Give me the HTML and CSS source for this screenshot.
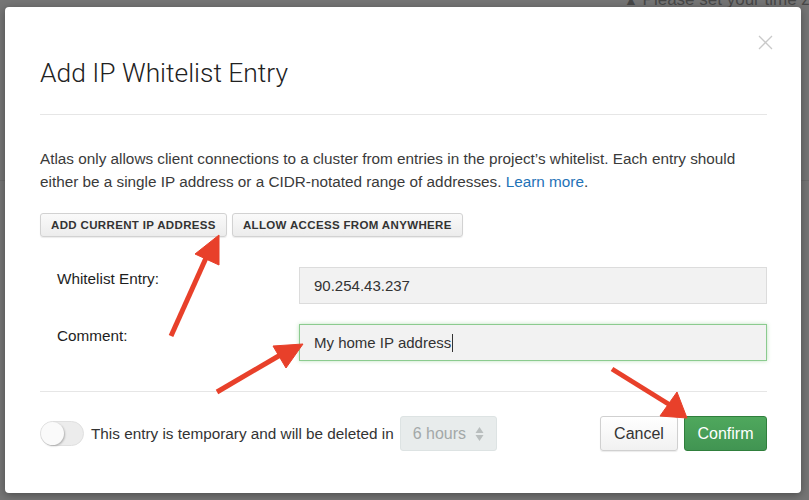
FILE: index.html
```html
<!DOCTYPE html>
<html>
<head>
<meta charset="utf-8">
<link rel="stylesheet" href="styles.css">
</head>
<body>
<div class="page">
  <div class="notice"><span class="warn">&#9650;</span> Please set your time zone</div>
  <div class="page-rule"></div>
</div>
<div class="modal">
  <button class="close" aria-label="Close">
    <svg width="15" height="15" viewBox="0 0 15 15"><path d="M1 1 L14 14 M14 1 L1 14" stroke="#c9c9c9" stroke-width="1.3" fill="none"/></svg>
  </button>
  <header class="modal-header">
    <h1 class="title">Add IP Whitelist Entry</h1>
  </header>
  <section class="modal-body">
    <p class="intro">Atlas only allows client connections to a cluster from entries in the project’s whitelist. Each entry should either be a single IP address or a CIDR-notated range of addresses. <a href="#" class="link">Learn more</a>.</p>
    <div class="quick">
      <button class="btn-small">Add current IP address</button>
      <button class="btn-small">Allow access from anywhere</button>
    </div>
    <div class="form">
      <div class="row">
        <label class="label">Whitelist Entry:</label>
        <div class="input">90.254.43.237</div>
      </div>
      <div class="row">
        <label class="label">Comment:</label>
        <div class="input focused">My home IP address<span class="caret"></span></div>
      </div>
    </div>
  </section>
  <footer class="modal-footer">
    <div class="temp">
      <span class="toggle"><span class="knob"></span></span>
      <span class="temp-text">This entry is temporary and will be deleted in</span>
      <span class="select">6 hours
        <svg class="updown" width="9" height="16" viewBox="0 0 9 16"><path d="M4.5 1 L8.5 7 L0.5 7 Z M4.5 15 L8.5 9 L0.5 9 Z" fill="#b9bebe"/></svg>
      </span>
    </div>
    <div class="actions">
      <button class="btn cancel">Cancel</button>
      <button class="btn confirm">Confirm</button>
    </div>
  </footer>
</div>
<svg class="arrows" width="809" height="500" viewBox="0 0 809 500">
  <g fill="#e8402a" stroke="#e8402a" stroke-linejoin="miter">
    <line x1="171" y1="336" x2="206" y2="258" stroke-width="5"/>
    <polygon points="219,235 195,254 219,265" stroke-width="1"/>
    <line x1="217" y1="392" x2="282" y2="354" stroke-width="5"/>
    <polygon points="303,344 273,346 286,368" stroke-width="1"/>
    <line x1="612" y1="369" x2="670" y2="405" stroke-width="5"/>
    <polygon points="687,418 660,416 677,392" stroke-width="1"/>
  </g>
</svg>
</body>
</html>
```
FILE: styles.css
```css
* { box-sizing: border-box; }
html, body { margin: 0; padding: 0; }
body {
  width: 809px;
  height: 500px;
  overflow: hidden;
  background: #757575;
  font-family: "Liberation Sans", Arial, sans-serif;
  color: #333;
  position: relative;
}
.page {
  position: absolute;
  inset: 0;
}
.notice {
  position: absolute;
  left: 624px;
  top: -10px;
  font-size: 17px;
  color: #474747;
  white-space: nowrap;
}
.warn { font-size: 14px; }
.page-rule {
  position: absolute;
  left: 0; right: 0;
  top: 180px;
  height: 1px;
  background: #6c6c6c;
}
.modal {
  position: relative;
  margin: 7px 8px 0 5px;
  width: 796px;
  height: 486px;
  background: #fff;
  border-radius: 4px;
  box-shadow: 0 2px 8px rgba(0,0,0,0.35);
  padding: 0 34px 0 35px;
}
.close {
  position: absolute;
  top: 28px;
  right: 28px;
  border: 0;
  background: none;
  padding: 0;
  width: 15px;
  height: 15px;
  display: flex;
}
.modal-header {
  padding-top: 50px;
  border-bottom: 1px solid #e6e6e6;
  padding-bottom: 25px;
}
.title {
  margin: 0;
  font-family: Roboto, "Liberation Sans", sans-serif;
  font-weight: 300;
  font-size: 26.4px;
  line-height: 32px;
  color: #222;
}
.modal-body {
  padding-top: 32px;
  padding-bottom: 30px;
  border-bottom: 1px solid #e6e6e6;
}
.intro {
  margin: 0;
  font-size: 15.3px;
  line-height: 23px;
  color: #3a3a3a;
}
.link { color: #1f73b7; text-decoration: none; }
.quick {
  margin-top: 20px;
  display: flex;
  gap: 5px;
}
.btn-small {
  height: 24px;
  padding: 0 10px;
  font-family: "Liberation Sans", Arial, sans-serif;
  font-size: 11.5px;
  font-weight: bold;
  letter-spacing: 0.35px;
  text-transform: uppercase;
  color: #333;
  background: linear-gradient(#fafafa, #ececec);
  border: 1px solid #d2d2d2;
  border-radius: 3px;
  box-shadow: 0 1px 1px rgba(0,0,0,0.08);
}
.form {
  margin-top: 30px;
  display: flex;
  flex-direction: column;
  gap: 20px;
}
.row {
  display: flex;
  align-items: flex-start;
  padding-left: 17px;
}
.label {
  width: 242px;
  font-size: 15.3px;
  line-height: 20px;
  padding-top: 2px;
  color: #1e1e1e;
}
.input {
  flex: 1;
  height: 37px;
  display: flex;
  align-items: center;
  padding: 0 14px;
  font-size: 15px;
  color: #333;
  background: #f2f2f2;
  border: 1px solid #dcdcdc;
}
.input.focused {
  border-color: #8bcb8f;
  box-shadow: 0 0 4px rgba(110, 190, 110, 0.45);
}
.caret {
  display: inline-block;
  width: 1px;
  height: 18px;
  background: #333;
  margin-left: 1px;
}
.modal-footer {
  padding-top: 24px;
  display: flex;
  justify-content: space-between;
  align-items: center;
}
.temp {
  display: flex;
  align-items: center;
}
.toggle {
  width: 44px;
  height: 25px;
  border-radius: 13px;
  background: #ececec;
  border: 1px solid #e0e0e0;
  position: relative;
  display: inline-block;
}
.knob {
  position: absolute;
  left: 0; top: 0;
  width: 23px;
  height: 23px;
  border-radius: 50%;
  background: #fafafa;
  box-shadow: 1px 1px 2px rgba(0,0,0,0.25);
}
.temp-text {
  margin-left: 7px;
  font-size: 15.3px;
  color: #333;
}
.select {
  margin-left: 6px;
  width: 97px;
  height: 35px;
  display: flex;
  align-items: center;
  justify-content: space-between;
  padding: 0 12px 0 12px;
  background: #e8ecec;
  border: 1px solid #dde3e3;
  border-radius: 3px;
  font-size: 16px;
  color: #a3a8a8;
}
.actions {
  display: flex;
  gap: 6px;
}
.btn {
  height: 35px;
  font-family: "Liberation Sans", Arial, sans-serif;
  font-size: 16px;
  border-radius: 3px;
  padding: 0;
}
.cancel {
  width: 78px;
  color: #333;
  background: linear-gradient(#ffffff, #f1f1f1);
  border: 1px solid #d0d0d0;
  box-shadow: 0 1px 1px rgba(0,0,0,0.08);
}
.confirm {
  width: 83px;
  color: #fff;
  background: linear-gradient(#4fa85d, #419452);
  border: 1px solid #2f7f3c;
}
.arrows {
  position: absolute;
  left: 0;
  top: 0;
  pointer-events: none;
}
```
